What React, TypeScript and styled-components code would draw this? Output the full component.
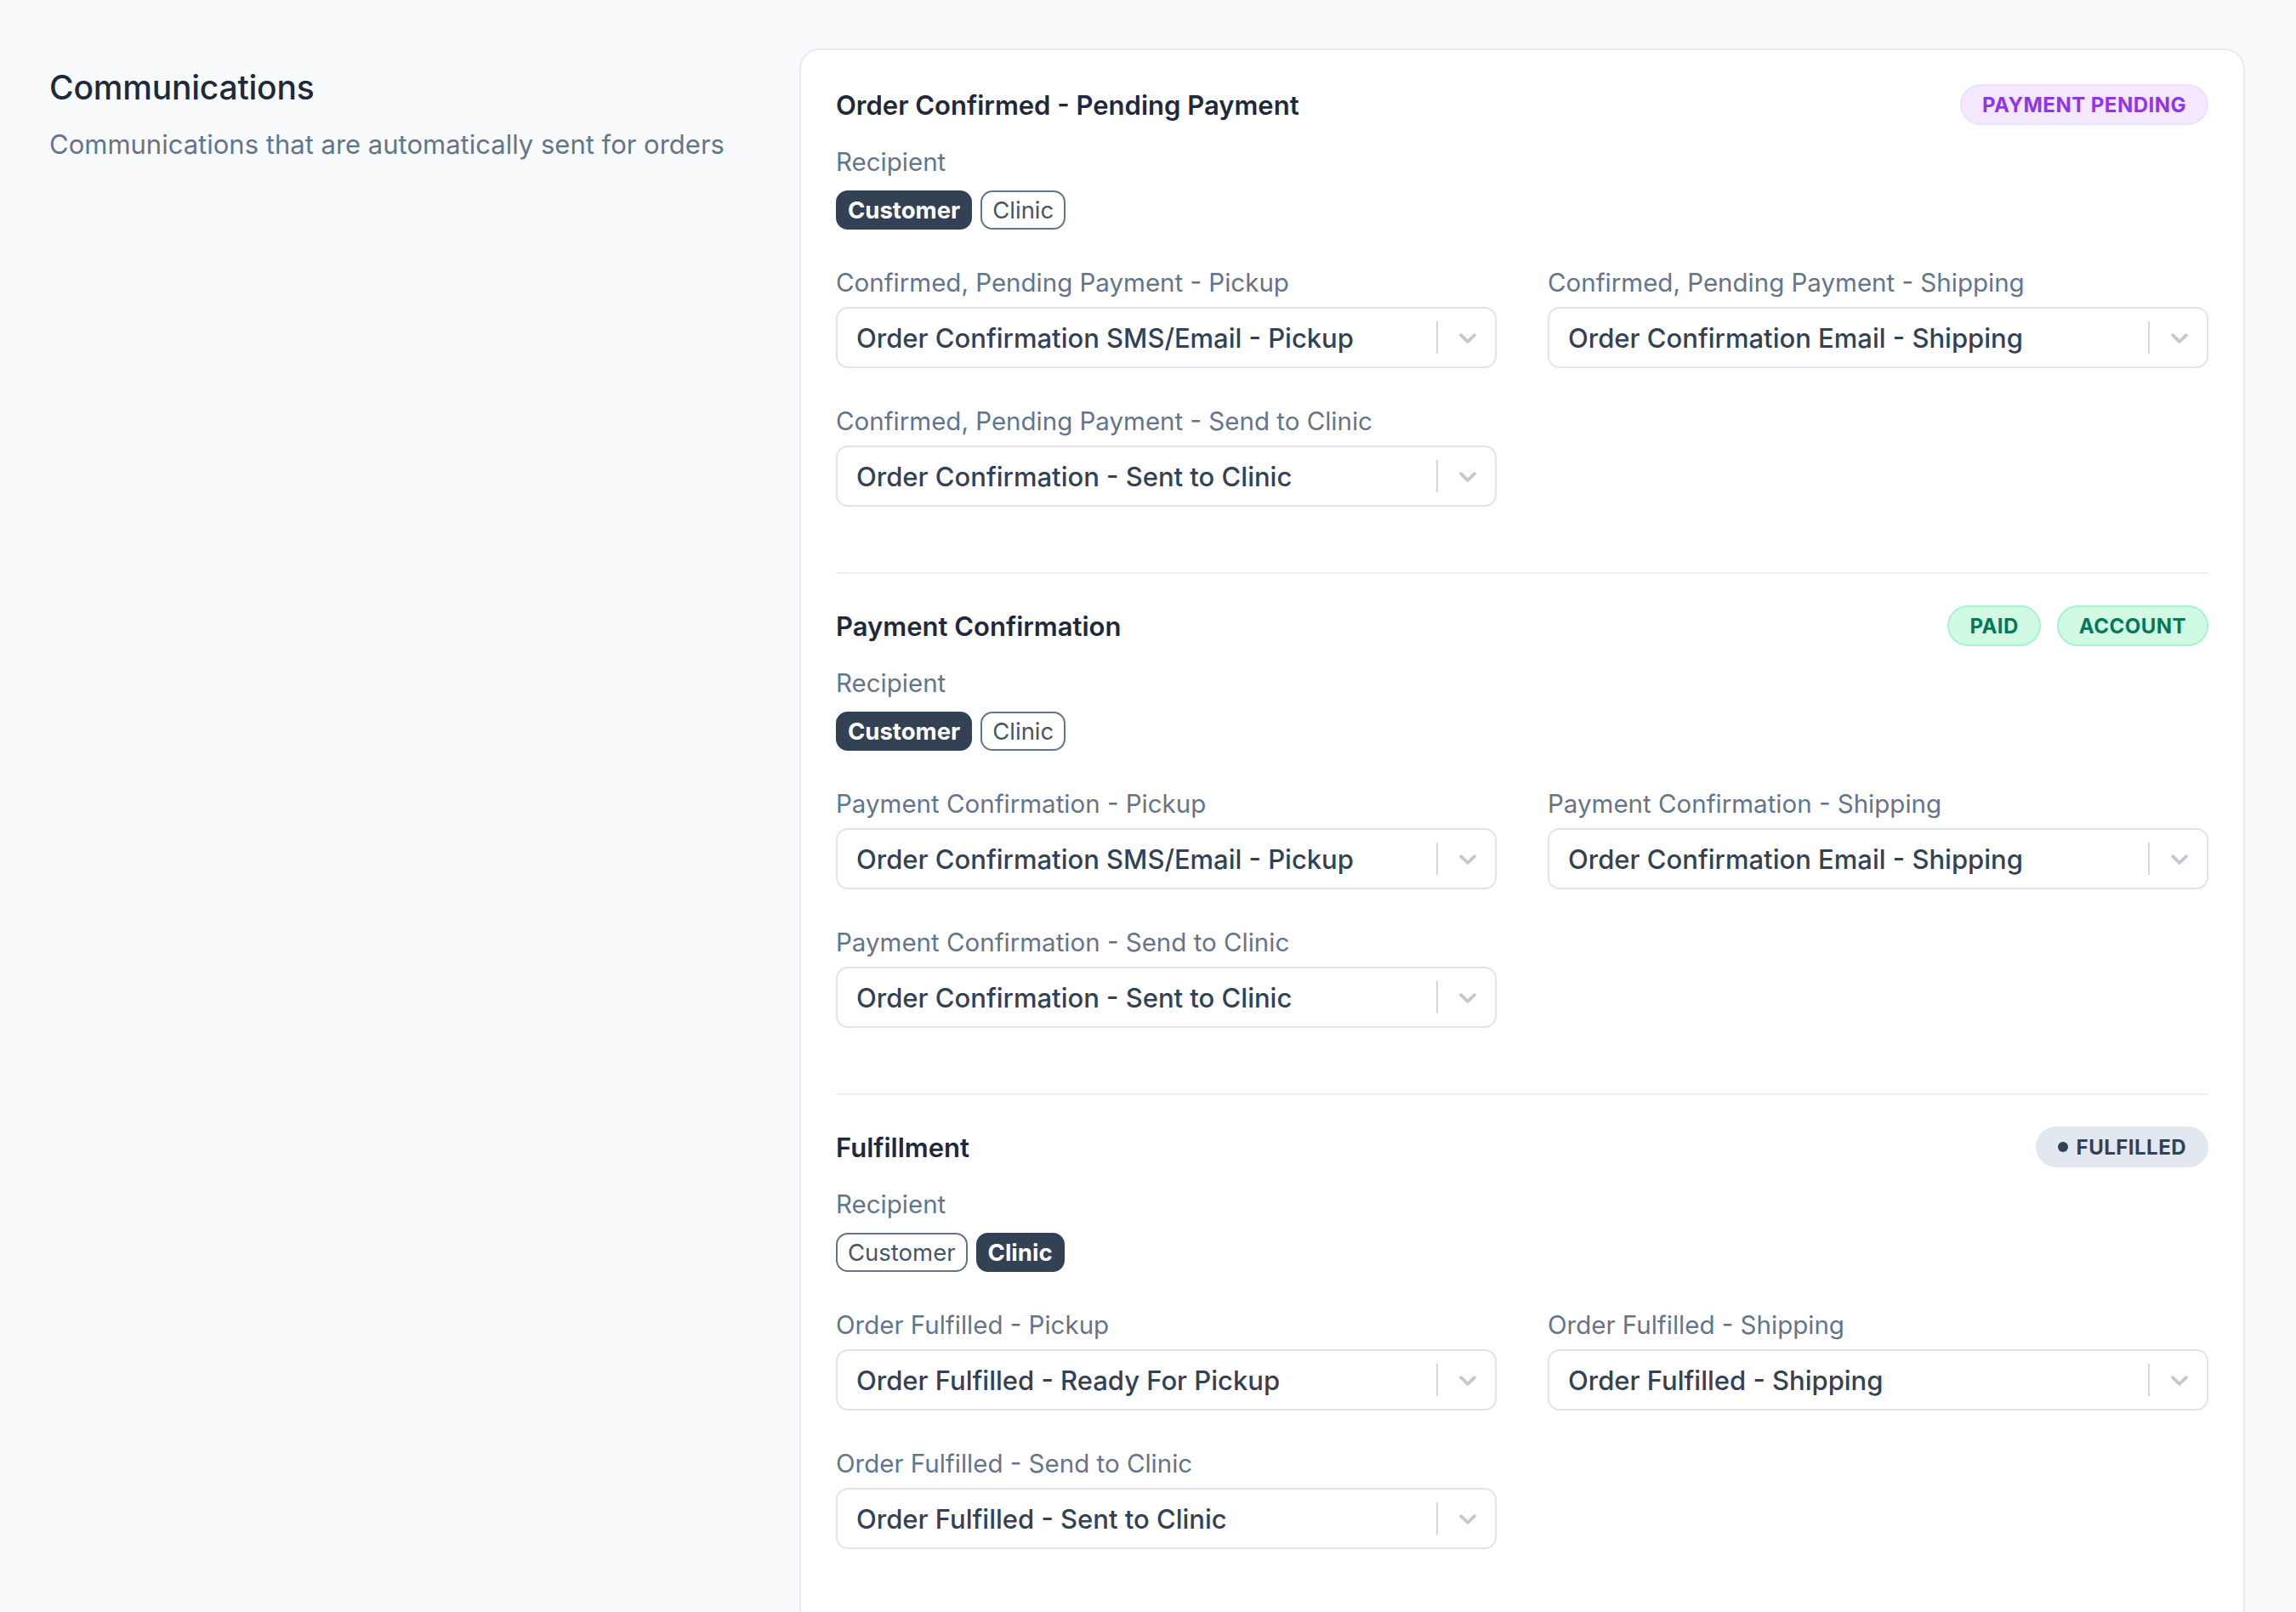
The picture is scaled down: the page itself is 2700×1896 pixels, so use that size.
import React from 'react';
import styled, { createGlobalStyle, css } from 'styled-components';

const GlobalStyle = createGlobalStyle`
  html, body {
    margin: 0;
    padding: 0;
    background: #f9fafb;
  }
  body {
    font-family: Inter, "Noto Sans", "Liberation Sans", sans-serif;
    color: #334155;
    -webkit-font-smoothing: antialiased;
  }
`;

const Page = styled.div`
  display: grid;
  grid-template-columns: 822px 1700px;
  column-gap: 60px;
  padding: 57px 60px 0 58px;
  min-height: 1896px;
  box-sizing: border-box;
`;

const Intro = styled.div`
  padding-top: 18px;
`;

const Heading = styled.h2`
  margin: 0;
  font-size: 39px;
  line-height: 56px;
  font-weight: 500;
  color: #1e293b;
  letter-spacing: -0.2px;
`;

const Subtitle = styled.p`
  margin: 17px 0 0;
  font-size: 31px;
  line-height: 43px;
  color: #64748b;
`;

const Card = styled.div`
  background: #ffffff;
  border: 2px solid #e8eaef;
  border-radius: 24px;
  padding: 0 41px;
  align-self: start;
`;

const Section = styled.section`
  padding: 37px 0 77px;
  border-bottom: 2px solid #eceff3;

  &:first-child {
    padding-top: 40px;
  }

  &:last-child {
    border-bottom: none;
    padding-bottom: 96px;
  }
`;

const SectionHeader = styled.div`
  display: flex;
  align-items: center;
  justify-content: space-between;
  height: 48px;
`;

const SectionTitle = styled.h3`
  margin: 0;
  font-size: 31px;
  line-height: 43px;
  font-weight: 600;
  color: #1e293b;
`;

const Badges = styled.div`
  display: flex;
  gap: 19px;
`;

type Tone = 'purple' | 'green' | 'slate';

const tones = {
  purple: css`
    background: #f3e8ff;
    border-color: #efe0fd;
    color: #9333ea;
  `,
  green: css`
    background: #d1fae5;
    border-color: #a7f3d0;
    color: #047857;
  `,
  slate: css`
    background: #e2e8f0;
    border-color: #e2e8f0;
    color: #334155;
  `,
};

const Badge = styled.span<{ $tone: Tone }>`
  display: inline-flex;
  align-items: center;
  gap: 10px;
  height: 48px;
  box-sizing: border-box;
  padding: 0 24px;
  border: 2px solid transparent;
  border-radius: 999px;
  font-size: 24px;
  font-weight: 700;
  letter-spacing: 0.02em;
  ${(p) => tones[p.$tone]}
`;

const Dot = styled.span`
  width: 12px;
  height: 12px;
  border-radius: 50%;
  background: currentColor;
`;

const FieldLabel = styled.div`
  font-size: 29.5px;
  line-height: 43px;
  color: #64748b;
`;

const RecipientBlock = styled.div`
  margin-top: 22px;
`;

const ChipRow = styled.div`
  display: flex;
  gap: 10px;
  margin-top: 12px;
`;

const Chip = styled.button<{ $active: boolean }>`
  height: 46px;
  box-sizing: border-box;
  padding: 0 12px;
  border-radius: 14px;
  font-family: inherit;
  font-size: 27.5px;
  line-height: 42px;
  cursor: pointer;
  ${(p) =>
    p.$active
      ? css`
          background: #334155;
          border: 2px solid #334155;
          color: #ffffff;
          font-weight: 700;
        `
      : css`
          background: #ffffff;
          border: 2px solid #64748b;
          color: #475569;
          font-weight: 400;
        `}
`;

const Fields = styled.div`
  display: grid;
  grid-template-columns: 1fr 1fr;
  column-gap: 60px;
  row-gap: 41px;
  margin-top: 41px;
`;

const Field = styled.div`
  display: flex;
  flex-direction: column;
  gap: 7px;
`;

const Select = styled.div`
  display: flex;
  align-items: center;
  height: 72px;
  box-sizing: border-box;
  border: 2px solid #e1e5eb;
  border-radius: 14px;
  background: #ffffff;
  padding-left: 22px;
`;

const SelectValue = styled.span`
  flex: 1;
  font-size: 31px;
  font-weight: 500;
  color: #334155;
  white-space: nowrap;
`;

const Separator = styled.span`
  align-self: stretch;
  width: 2px;
  margin: 15px 0;
  background: #d3d7dd;
`;

const Indicator = styled.span`
  display: flex;
  align-items: center;
  padding: 0 15px 0 18px;
  color: #c4c9d1;
`;

// react-select style caret
const Chevron = () => (
  <svg width="34" height="34" viewBox="0 0 20 20" fill="currentColor">
    <path d="M4.516 7.548c0.436-0.446 1.043-0.481 1.576 0l3.908 3.747 3.908-3.747c0.533-0.481 1.141-0.446 1.574 0 0.436 0.445 0.408 1.197 0 1.615-0.406 0.418-4.695 4.502-4.695 4.502-0.217 0.223-0.502 0.335-0.787 0.335s-0.57-0.112-0.789-0.335c0 0-4.287-4.084-4.695-4.502s-0.436-1.170 0-1.615z" />
  </svg>
);

type BadgeInfo = { text: string; tone: Tone; dot?: boolean };
type FieldInfo = { label: string; value: string };
type Group = {
  title: string;
  badges: BadgeInfo[];
  recipient: 'Customer' | 'Clinic';
  fields: FieldInfo[];
};

const groups: Group[] = [
  {
    title: 'Order Confirmed - Pending Payment',
    badges: [{ text: 'PAYMENT PENDING', tone: 'purple' }],
    recipient: 'Customer',
    fields: [
      { label: 'Confirmed, Pending Payment - Pickup', value: 'Order Confirmation SMS/Email - Pickup' },
      { label: 'Confirmed, Pending Payment - Shipping', value: 'Order Confirmation Email - Shipping' },
      { label: 'Confirmed, Pending Payment - Send to Clinic', value: 'Order Confirmation - Sent to Clinic' },
    ],
  },
  {
    title: 'Payment Confirmation',
    badges: [
      { text: 'PAID', tone: 'green' },
      { text: 'ACCOUNT', tone: 'green' },
    ],
    recipient: 'Customer',
    fields: [
      { label: 'Payment Confirmation - Pickup', value: 'Order Confirmation SMS/Email - Pickup' },
      { label: 'Payment Confirmation - Shipping', value: 'Order Confirmation Email - Shipping' },
      { label: 'Payment Confirmation - Send to Clinic', value: 'Order Confirmation - Sent to Clinic' },
    ],
  },
  {
    title: 'Fulfillment',
    badges: [{ text: 'FULFILLED', tone: 'slate', dot: true }],
    recipient: 'Clinic',
    fields: [
      { label: 'Order Fulfilled - Pickup', value: 'Order Fulfilled - Ready For Pickup' },
      { label: 'Order Fulfilled - Shipping', value: 'Order Fulfilled - Shipping' },
      { label: 'Order Fulfilled - Send to Clinic', value: 'Order Fulfilled - Sent to Clinic' },
    ],
  },
];

const App = () => {
  return (
    <>
      <GlobalStyle />
      <Page>
        <Intro>
          <Heading>Communications</Heading>
          <Subtitle>Communications that are automatically sent for orders</Subtitle>
        </Intro>
        <Card>
          {groups.map((g) => (
            <Section key={g.title}>
              <SectionHeader>
                <SectionTitle>{g.title}</SectionTitle>
                <Badges>
                  {g.badges.map((b) => (
                    <Badge key={b.text} $tone={b.tone}>
                      {b.dot && <Dot />}
                      {b.text}
                    </Badge>
                  ))}
                </Badges>
              </SectionHeader>
              <RecipientBlock>
                <FieldLabel>Recipient</FieldLabel>
                <ChipRow>
                  <Chip $active={g.recipient === 'Customer'}>Customer</Chip>
                  <Chip $active={g.recipient === 'Clinic'}>Clinic</Chip>
                </ChipRow>
              </RecipientBlock>
              <Fields>
                {g.fields.map((f) => (
                  <Field key={f.label}>
                    <FieldLabel>{f.label}</FieldLabel>
                    <Select>
                      <SelectValue>{f.value}</SelectValue>
                      <Separator />
                      <Indicator>
                        <Chevron />
                      </Indicator>
                    </Select>
                  </Field>
                ))}
              </Fields>
            </Section>
          ))}
        </Card>
      </Page>
    </>
  );
};

export default App;
